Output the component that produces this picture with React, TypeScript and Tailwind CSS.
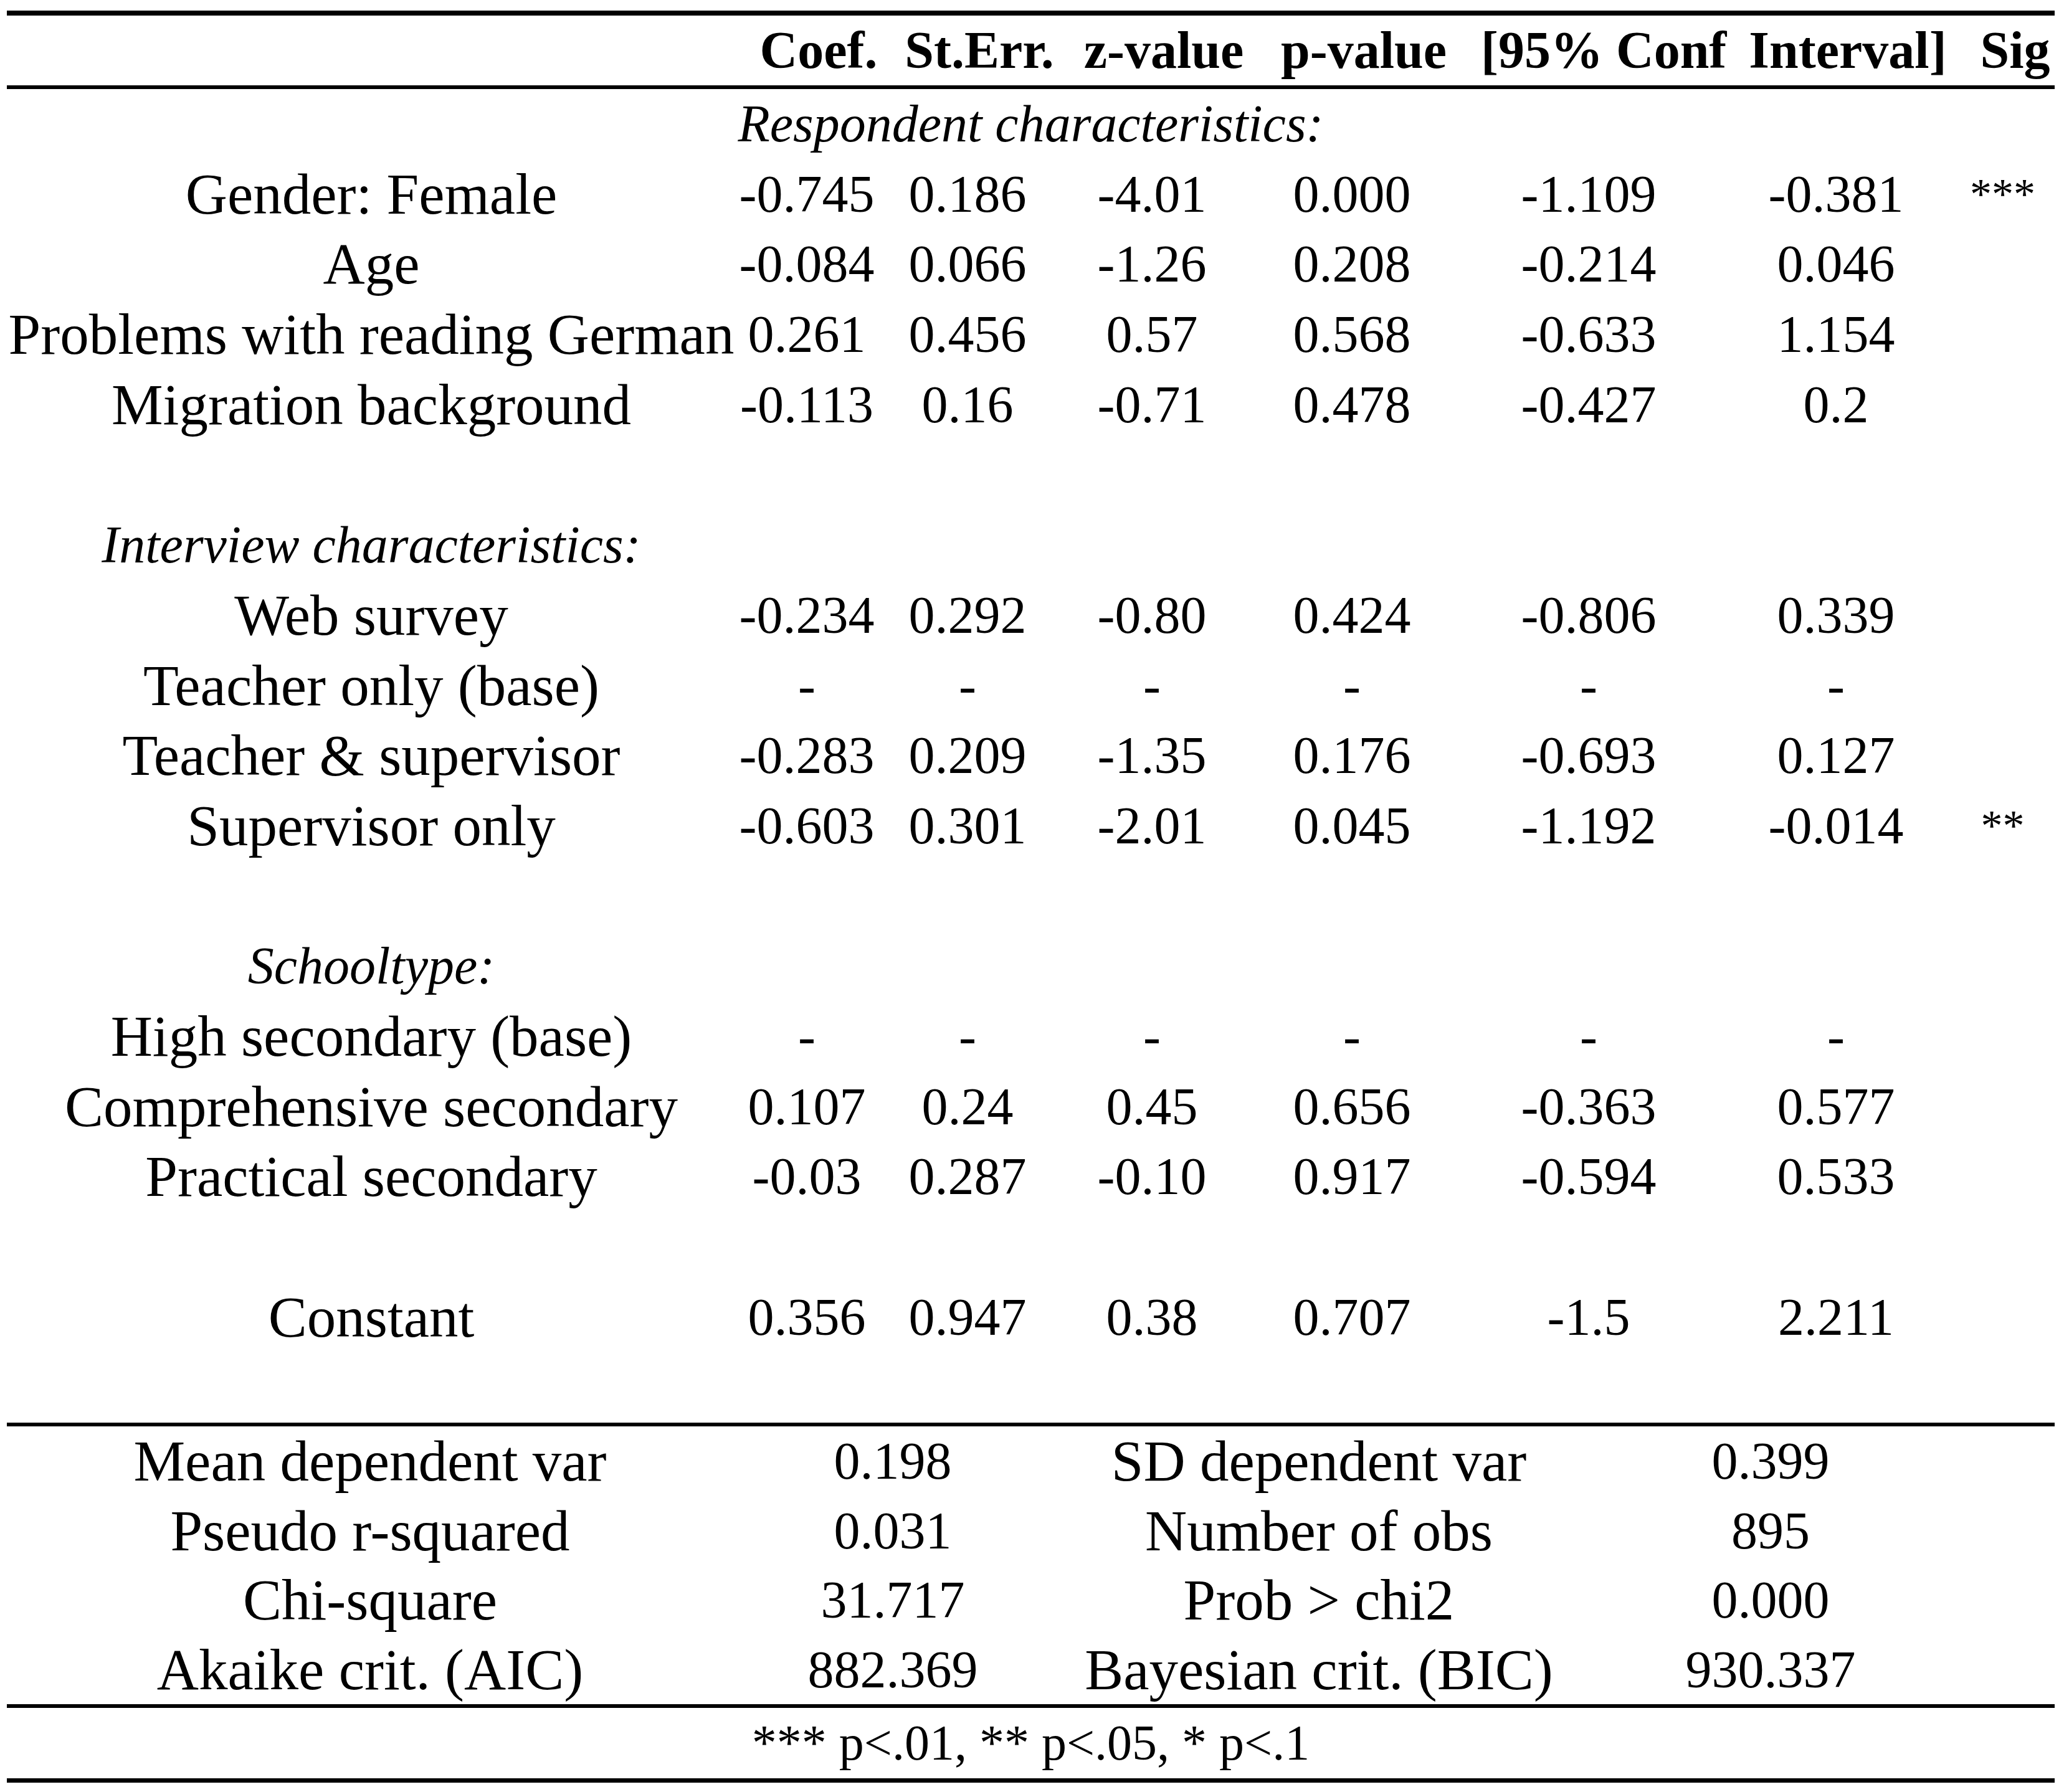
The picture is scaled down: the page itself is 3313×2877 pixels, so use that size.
import React from "react";

type Row =
  | { kind: "blank" }
  | { kind: "span"; text: string }
  | { kind: "group"; text: string }
  | { kind: "data"; label: string; v: string[]; sig?: string };

const D = ["-", "-", "-", "-", "-", "-"];

const rows: Row[] = [
  { kind: "span", text: "Respondent characteristics:" },
  { kind: "data", label: "Gender: Female", v: ["-0.745", "0.186", "-4.01", "0.000", "-1.109", "-0.381"], sig: "***" },
  { kind: "data", label: "Age", v: ["-0.084", "0.066", "-1.26", "0.208", "-0.214", "0.046"] },
  { kind: "data", label: "Problems with reading German", v: ["0.261", "0.456", "0.57", "0.568", "-0.633", "1.154"] },
  { kind: "data", label: "Migration background", v: ["-0.113", "0.16", "-0.71", "0.478", "-0.427", "0.2"] },
  { kind: "blank" },
  { kind: "group", text: "Interview characteristics:" },
  { kind: "data", label: "Web survey", v: ["-0.234", "0.292", "-0.80", "0.424", "-0.806", "0.339"] },
  { kind: "data", label: "Teacher only (base)", v: D },
  { kind: "data", label: "Teacher & supervisor", v: ["-0.283", "0.209", "-1.35", "0.176", "-0.693", "0.127"] },
  { kind: "data", label: "Supervisor only", v: ["-0.603", "0.301", "-2.01", "0.045", "-1.192", "-0.014"], sig: "**" },
  { kind: "blank" },
  { kind: "group", text: "Schooltype:" },
  { kind: "data", label: "High secondary (base)", v: D },
  { kind: "data", label: "Comprehensive secondary", v: ["0.107", "0.24", "0.45", "0.656", "-0.363", "0.577"] },
  { kind: "data", label: "Practical secondary", v: ["-0.03", "0.287", "-0.10", "0.917", "-0.594", "0.533"] },
  { kind: "blank" },
  { kind: "data", label: "Constant", v: ["0.356", "0.947", "0.38", "0.707", "-1.5", "2.211"] },
  { kind: "blank" },
];

const stats: [string, string, string, string][] = [
  ["Mean dependent var", "0.198", "SD dependent var", "0.399"],
  ["Pseudo r-squared", "0.031", "Number of obs", "895"],
  ["Chi-square", "31.717", "Prob > chi2", "0.000"],
  ["Akaike crit. (AIC)", "882.369", "Bayesian crit. (BIC)", "930.337"],
];

const GRID =
  "grid grid-cols-[1170px_228px_288px_304px_338px_422px_372px_165px]";

const headers = ["Coef.", "St.Err.", "z-value", "p-value", "[95% Conf", "Interval]", "Sig"];

export default function App() {
  return (
    <div className="w-[3313px] h-[2877px] bg-white text-black font-['Liberation_Serif',serif]">
      <div className="ml-[11px] w-[3287px] pt-[17px]">
        <div className="h-[8px] bg-black" />
        <div className={`${GRID} h-[112px] items-center`}>
          <div />
          {headers.map((h) => (
            <div
              key={h}
              className="text-center font-bold text-[84px] leading-[112px] pl-[38px] whitespace-nowrap"
            >
              {h}
            </div>
          ))}
        </div>
        <div className="h-[6px] bg-black" />

        {rows.map((r, i) => {
          if (r.kind === "blank") return <div key={i} className="h-[112.7px]" />;
          if (r.kind === "span")
            return (
              <div key={i} className="h-[112.7px] text-center italic text-[84px] leading-[112.7px]">
                {r.text}
              </div>
            );
          if (r.kind === "group")
            return (
              <div key={i} className={`${GRID} h-[112.7px]`}>
                <div className="text-center italic text-[84px] leading-[112.7px] whitespace-nowrap">
                  {r.text}
                </div>
              </div>
            );
          return (
            <div key={i} className={`${GRID} h-[112.7px]`}>
              <div className="text-center text-[93px] leading-[112.7px] whitespace-nowrap">{r.label}</div>
              {r.v.map((v, j) => (
                <div key={j} className="text-center text-[84px] leading-[112.7px] whitespace-nowrap">
                  {v}
                </div>
              ))}
              <div className="text-center text-[70px] leading-[112.7px] pb-[10px] pr-[2px]">{r.sig ?? ""}</div>
            </div>
          );
        })}

        <div className="h-[6px] bg-black" />
        {stats.map((s, i) => (
          <div
            key={i}
            className="grid grid-cols-[1166px_512px_856px_594px_159px] h-[111.5px] leading-[111.5px]"
          >
            <div className="text-center text-[93px] whitespace-nowrap">{s[0]}</div>
            <div className="text-center text-[84px]">{s[1]}</div>
            <div className="text-center text-[93px] whitespace-nowrap">{s[2]}</div>
            <div className="text-center text-[84px]">{s[3]}</div>
            <div />
          </div>
        ))}
        <div className="h-[6px] bg-black" />
        <div className="h-[113px] text-center text-[80px] leading-[113px]">
          *** p&lt;.01, ** p&lt;.05, * p&lt;.1
        </div>
        <div className="h-[7px] bg-black" />
      </div>
    </div>
  );
}
